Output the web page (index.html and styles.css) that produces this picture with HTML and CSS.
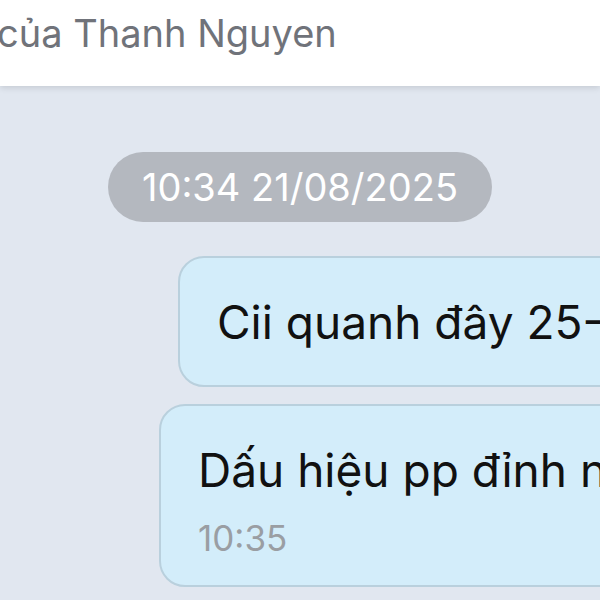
FILE: index.html
```html
<!DOCTYPE html>
<html lang="vi">
<head>
    <meta charset="UTF-8">
    <meta name="viewport" content="width=device-width, initial-scale=1.0">
    <title>Tin nhắn</title>
    <link rel="stylesheet" href="styles.css">
</head>
<body>
    <div class="topbar">
        <div class="title">của Thanh Nguyen</div>
    </div>

    <div class="chat">
        <div class="time-pill">10:34 21/08/2025</div>

        <div class="bubble first">
            <div class="msg">Cii quanh đây 25-</div>
        </div>

        <div class="bubble second">
            <div class="msg">Dấu hiệu pp đỉnh n</div>
            <div class="stamp">10:35</div>
        </div>
    </div>
</body>
</html>
```

FILE: styles.css
```css
/* Chat screen */
body {
    font-family: Inter, "Noto Sans", sans-serif;
    background-color: #e1e7f0;
    margin: 0;
    width: 600px;
    height: 600px;
    overflow: hidden;
}

.topbar {
    height: 86px;
    background-color: #fff;
    box-shadow: 0 2px 6px rgba(0, 0, 0, 0.12);
    position: relative;
    z-index: 1;
}

.title {
    font-size: 38px;
    color: #70737a;
    white-space: nowrap;
    margin-left: -3px;
    padding-top: 10px;
    line-height: 46px;
}

.chat {
    display: flex;
    flex-direction: column;
    align-items: flex-start;
}

.time-pill {
    align-self: center;
    margin-top: 66px;
    height: 70px;
    line-height: 70px;
    padding: 0 34px;
    border-radius: 35px;
    background-color: #b4b8bf;
    color: #fff;
    font-size: 38px;
    white-space: nowrap;
}

.bubble {
    width: 560px;
    background-color: #d3edfa;
    border: 2px solid #b9d0dd;
    border-radius: 26px;
    box-sizing: border-box;
    padding-left: 37px;
    white-space: nowrap;
}

.bubble.first {
    margin-top: 34px;
    margin-left: 178px;
    height: 131px;
    display: flex;
    align-items: center;
}

.bubble.second {
    margin-top: 17px;
    margin-left: 159px;
    height: 183px;
    padding-top: 38px;
}

.msg {
    font-size: 46px;
    line-height: 52px;
    color: #111;
}

.stamp {
    font-size: 35px;
    line-height: 40px;
    color: #9a9ea3;
    margin-top: 22px;
}
```
